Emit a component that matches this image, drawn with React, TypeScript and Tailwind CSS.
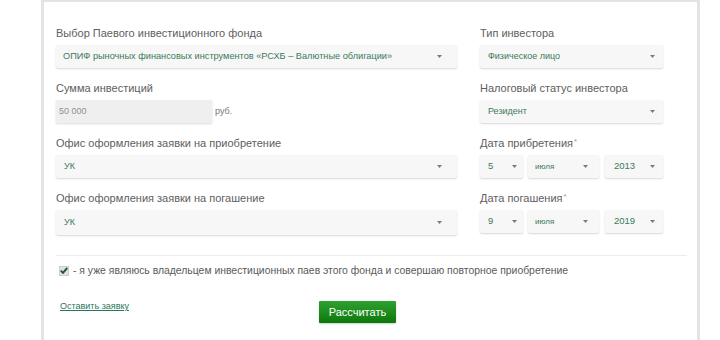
import React from "react";

const FONT = { fontFamily: '"Liberation Sans", Arial, sans-serif' };

function Arrow() {
  return (
    <svg width="5" height="3" viewBox="0 0 5 3" className="shrink-0">
      <path d="M0 0 L5 0 L2.5 3 Z" fill="#7a7a7a" />
    </svg>
  );
}

function Select({
  value,
  className = "",
  pr = "pr-[15px]",
  pl = "pl-[7px]",
  text = "text-[9px]",
}: {
  value: string;
  className?: string;
  pr?: string;
  pl?: string;
  text?: string;
}) {
  return (
    <div
      className={`h-[23px] flex items-center justify-between bg-[#f7f7f7] rounded-[2px] shadow-[0_1px_2px_rgba(0,0,0,0.16)] ${pl} ${pr} ${className}`}
    >
      <span className={`${text} text-[#3a7a5a] whitespace-nowrap`}>{value}</span>
      <Arrow />
    </div>
  );
}

function Label({ children, req }: { children: React.ReactNode; req?: boolean }) {
  return (
    <div className="h-[14px] flex items-center text-[11px] text-[#5e5e5e] whitespace-nowrap">
      {children}
      {req && <span className="text-[8px] text-[#d98585] ml-[1px] -mt-[2px]">*</span>}
    </div>
  );
}

function DateRow({ day, month, year }: { day: string; month: string; year: string }) {
  return (
    <div className="mt-[5px] flex">
      <Select value={day} className="w-[43px]" pl="pl-[8px]" pr="pr-[6px]" text="text-[9.5px]" />
      <Select value={month} className="w-[71px] ml-[5px]" pl="pl-[7px]" pr="pr-[11px]" text="text-[8px]" />
      <Select value={year} className="w-[58px] ml-[6px]" pl="pl-[9px]" pr="pr-[8px]" text="text-[9.5px]" />
    </div>
  );
}

export default function App() {
  return (
    <div className="w-[720px] h-[340px] bg-white overflow-hidden pl-[41px]" style={FONT}>
      <div className="w-[659px] h-[360px] border-x-[3px] border-t-2 border-[#e3e3e3] pl-[12px] pt-[24px]">
        {/* row 1 */}
        <div className="flex gap-[23px]">
          <div className="w-[401px]">
            <Label>Выбор Паевого инвестиционного фонда</Label>
            <Select
              className="mt-[5px]"
              pr="pr-[15px]"
              text="text-[9.2px]"
              value="ОПИФ рыночных финансовых инструментов «РСХБ – Валютные облигации»"
            />
          </div>
          <div className="w-[183px]">
            <Label>Тип инвестора</Label>
            <Select className="mt-[5px]" pl="pl-[8px]" pr="pr-[8px]" value="Физическое лицо" />
          </div>
        </div>

        {/* row 2 */}
        <div className="flex gap-[23px] mt-[13px]">
          <div className="w-[401px]">
            <Label>Сумма инвестиций</Label>
            <div className="mt-[5px] flex items-center">
              <div className="w-[156px] h-[23px] bg-[#efefef] shadow-[0_1px_2px_rgba(0,0,0,0.14)] flex items-center pl-[3px] text-[9px] text-[#8f8f8f]">
                50 000
              </div>
              <span className="ml-[3px] text-[9px] text-[#777]">руб.</span>
            </div>
          </div>
          <div className="w-[183px]">
            <Label>Налоговый статус инвестора</Label>
            <Select className="mt-[5px]" pl="pl-[8px]" pr="pr-[8px]" value="Резидент" />
          </div>
        </div>

        {/* row 3 */}
        <div className="flex gap-[23px] mt-[13px]">
          <div className="w-[401px]">
            <Label>Офис оформления заявки на приобретение</Label>
            <Select className="mt-[5px]" pl="pl-[8px]" value="УК" />
          </div>
          <div className="w-[183px]">
            <Label req>Дата прибретения</Label>
            <DateRow day="5" month="июля" year="2013" />
          </div>
        </div>

        {/* row 4 */}
        <div className="flex gap-[23px] mt-[13px]">
          <div className="w-[401px]">
            <Label>Офис оформления заявки на погашение</Label>
            <Select className="mt-[5px] h-[25px]" pl="pl-[8px]" value="УК" />
          </div>
          <div className="w-[183px]">
            <Label req>Дата погашения</Label>
            <DateRow day="9" month="июля" year="2019" />
          </div>
        </div>

        <div className="mt-[20px] w-[631px] h-px bg-[#ececec]" />

        <div className="mt-[9px] ml-[3px] flex items-center h-[11px]">
          <div className="w-[10px] h-[10px] bg-[#e2e2e2] border border-[#cdcdcd] flex items-center justify-center">
            <svg width="8" height="7" viewBox="0 0 8 7">
              <path d="M0.8 3.6 L3 5.8 L7.2 1" stroke="#1c5536" strokeWidth="1.9" fill="none" />
            </svg>
          </div>
          <span className="ml-[4px] text-[10.4px] text-[#5a5a5a] whitespace-nowrap">
            - я уже являюсь владельцем инвестиционных паев этого фонда и совершаю повторное приобретение
          </span>
        </div>

        <div className="mt-[21px] flex items-start">
          <a href="#" className="ml-[4px] mt-[3px] text-[9px] text-[#2a7758] underline">
            Оставить заявку
          </a>
          <button className="ml-[190px] mt-[4px] w-[77px] h-[22px] bg-gradient-to-b from-[#2ea12e] to-[#0b780b] text-white text-[11px] rounded-[1px] shadow-[0_1px_2px_rgba(0,0,0,0.2)]">
            Рассчитать
          </button>
        </div>
      </div>
    </div>
  );
}
